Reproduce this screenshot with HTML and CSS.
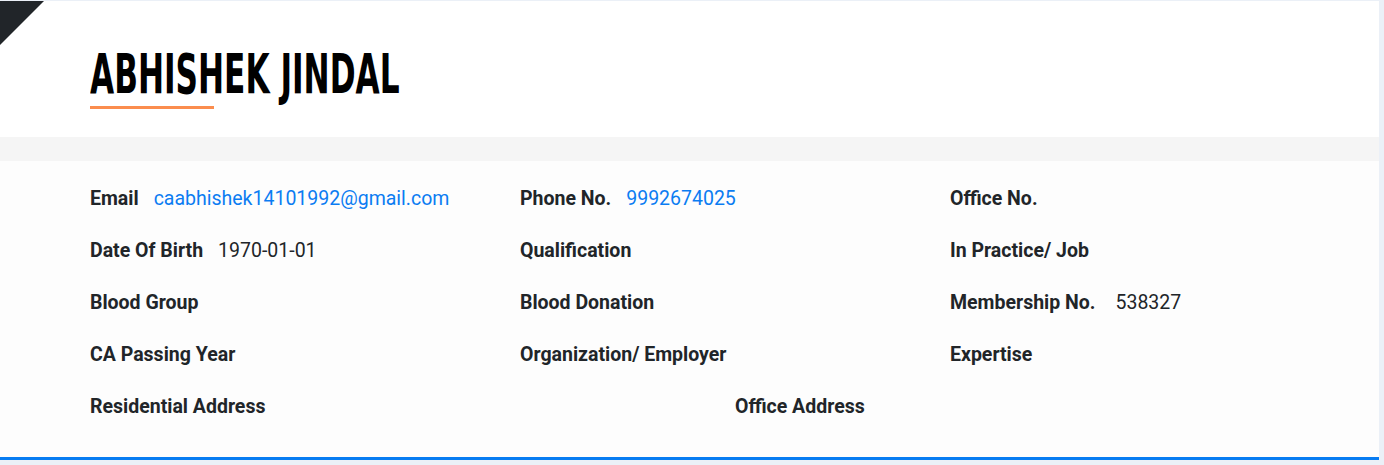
FILE: index.html
```html
<!DOCTYPE html>
<html>
<head>
<meta charset="utf-8">
<title>Profile</title>
<link rel="stylesheet" href="styles.css">
</head>
<body>
<div class="card">
  <span class="corner"></span>
  <header class="card-head">
    <h1 class="name">ABHISHEK JINDAL</h1>
    <div class="name-line"></div>
  </header>
  <div class="band"></div>
  <section class="details">
    <div class="grid three">
      <div class="item"><span class="label">Email</span><a class="value link" href="#">caabhishek14101992@gmail.com</a></div>
      <div class="item"><span class="label">Phone No.</span><a class="value link" href="#">9992674025</a></div>
      <div class="item"><span class="label">Office No.</span></div>
      <div class="item"><span class="label">Date Of Birth</span><span class="value">1970-01-01</span></div>
      <div class="item"><span class="label">Qualification</span></div>
      <div class="item"><span class="label">In Practice/ Job</span></div>
      <div class="item"><span class="label">Blood Group</span></div>
      <div class="item"><span class="label">Blood Donation</span></div>
      <div class="item"><span class="label">Membership No.</span><span class="value wide">538327</span></div>
      <div class="item"><span class="label">CA Passing Year</span></div>
      <div class="item"><span class="label">Organization/ Employer</span></div>
      <div class="item"><span class="label">Expertise</span></div>
    </div>
    <div class="grid two">
      <div class="item"><span class="label">Residential Address</span></div>
      <div class="item"><span class="label">Office Address</span></div>
    </div>
  </section>
</div>
</body>
</html>
```
FILE: styles.css
```css
html, body {
  margin: 0;
  padding: 0;
}
body {
  background: #ebf0f7;
  padding: 1px 5px 0 0;
  font-family: Roboto, "Liberation Sans", Arial, sans-serif;
  color: #212529;
  overflow: hidden;
}
.card {
  position: relative;
  background: #fdfdfd;
  border-bottom: 3px solid #077cf2;
}
.corner {
  position: absolute;
  left: 0;
  top: 0;
  width: 44px;
  height: 44px;
  background: #212529;
  clip-path: polygon(0 0, 100% 0, 0 100%);
}
.card-head {
  background: #ffffff;
  padding: 45px 0 28px 90px;
}
.name {
  margin: 0;
  font-family: "DejaVu Sans Condensed", "Liberation Sans", sans-serif;
  font-weight: 700;
  font-size: 55px;
  line-height: 56px;
  color: #000;
  letter-spacing: 0;
  transform: scaleX(0.63);
  transform-origin: left center;
  white-space: nowrap;
}
.name-line {
  margin-top: 4px;
  width: 124px;
  height: 3px;
  background: #fb8d4e;
}
.band {
  height: 24px;
  background: #f5f5f5;
}
.details {
  padding: 12px 0 25px 90px;
}
.grid {
  display: grid;
  width: 1290px;
}
.grid.three {
  grid-template-columns: repeat(3, 430px);
}
.grid.two {
  grid-template-columns: repeat(2, 645px);
}
.item {
  height: 51.8px;
  display: flex;
  align-items: center;
  font-size: 19.5px;
  white-space: nowrap;
}
.label {
  font-weight: 700;
  color: #212529;
}
.value {
  margin-left: 15px;
  font-weight: 400;
  color: #212529;
}
.value.wide {
  margin-left: 20px;
}
.link {
  color: #0b7cf2;
  text-decoration: none;
}
```
